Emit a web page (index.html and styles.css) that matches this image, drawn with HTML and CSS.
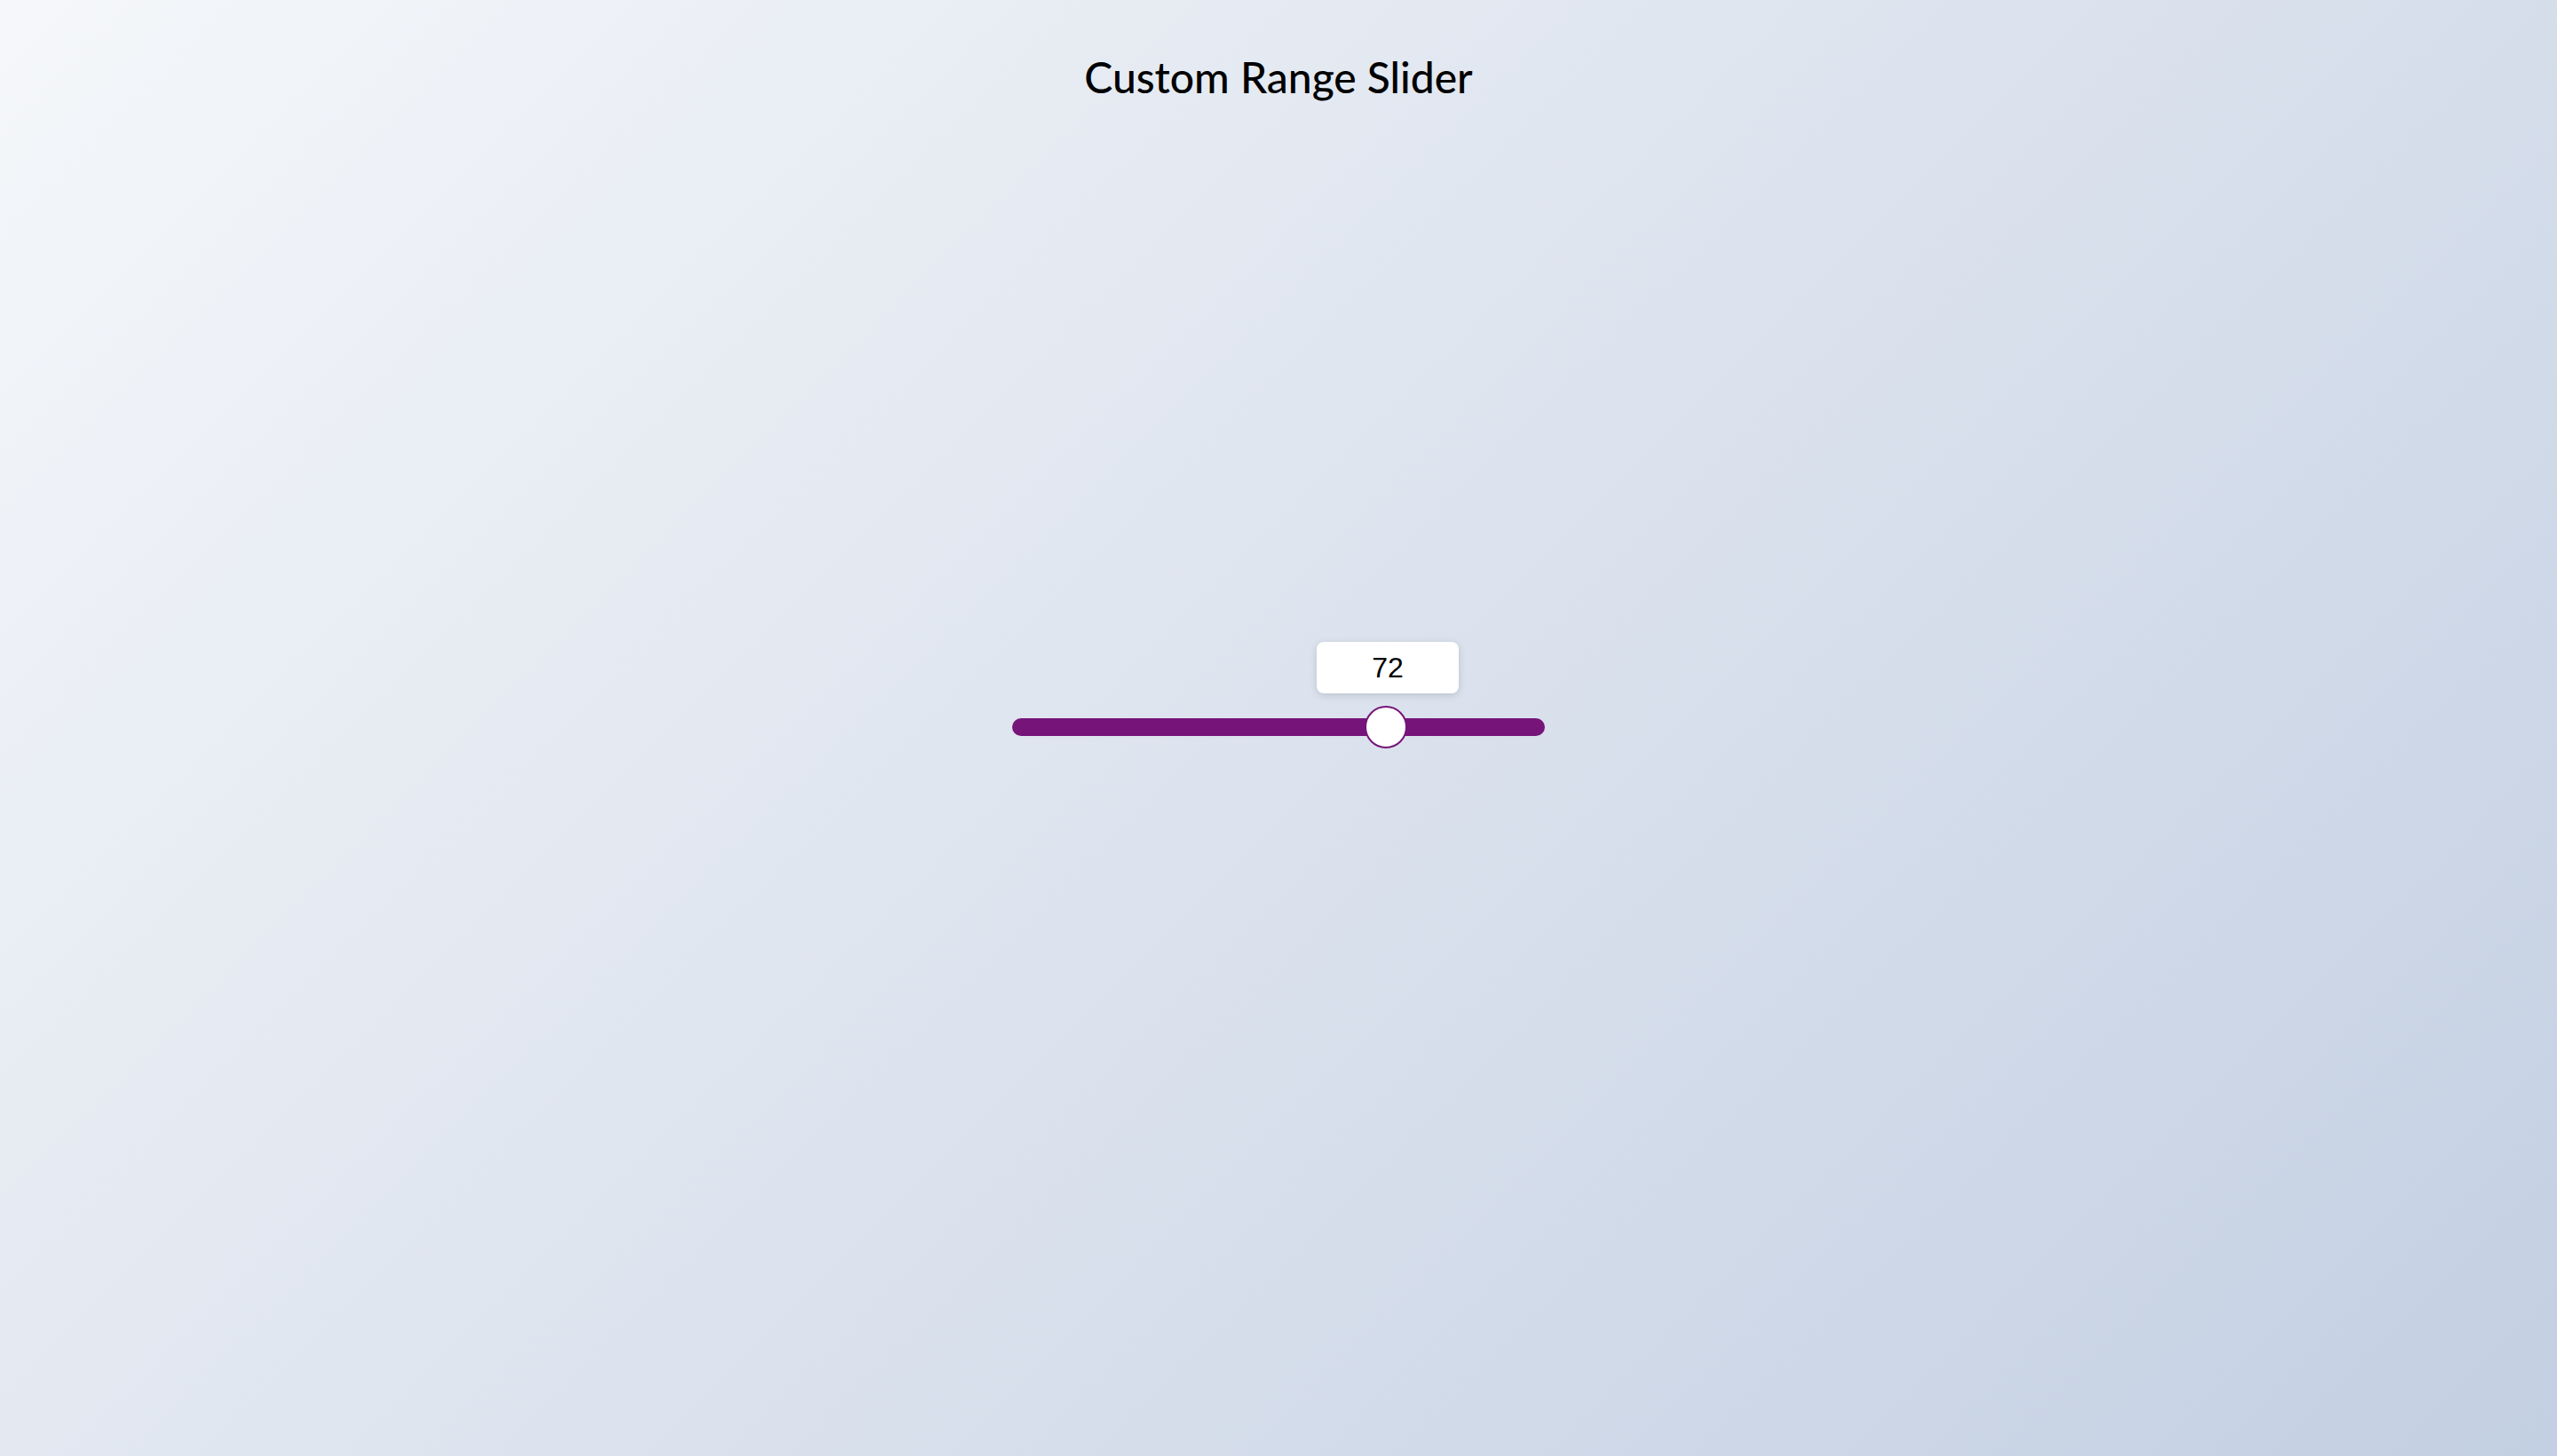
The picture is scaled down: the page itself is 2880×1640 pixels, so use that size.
FILE: index.html
```html
<!DOCTYPE html>
<html lang="en">
<head>
<meta charset="utf-8">
<title>Custom Range Slider</title>
<link rel="stylesheet" href="styles.css">
</head>
<body>
  <h1 class="title">Custom Range Slider</h1>
  <div class="slider-area">
    <div class="range-wrap">
      <div class="range-value" style="left: calc(72% - 9px);">72</div>
      <input class="range" type="range" min="0" max="100" value="72">
    </div>
  </div>
</body>
</html>
```
FILE: styles.css
```css
html, body {
  margin: 0;
  padding: 0;
  height: 100%;
}

body {
  background: linear-gradient(135deg, #f5f7fa 0%, #c3cfe2 100%);
  font-family: Lato, "Open Sans", sans-serif;
  display: grid;
  grid-template-rows: 1fr auto 1fr;
  justify-items: center;
  overflow: hidden;
}

.title {
  align-self: start;
  margin: 58px 0 0;
  font-size: 48px;
  font-weight: 500;
  line-height: normal;
  color: #000;
}

.slider-area {
  grid-row: 2;
  display: flex;
  justify-content: center;
  margin-bottom: 2px;
}

.range-wrap {
  position: relative;
  width: 600px;
  height: 20px;
}

.range {
  -webkit-appearance: none;
  appearance: none;
  display: block;
  margin: 0;
  width: 600px;
  height: 20px;
  border-radius: 10px;
  background: #761479;
  outline: none;
}

.range::-webkit-slider-thumb {
  -webkit-appearance: none;
  appearance: none;
  box-sizing: content-box;
  width: 44px;
  height: 44px;
  border-radius: 50%;
  background: #fff;
  border: 2px solid #761479;
  cursor: pointer;
}

.range-value {
  position: absolute;
  top: -86px;
  transform: translateX(-50%);
  width: 160px;
  height: 58px;
  background: #fff;
  border-radius: 8px;
  box-shadow: 0 2px 8px rgba(0, 0, 0, 0.15);
  display: flex;
  align-items: center;
  justify-content: center;
  font-family: "Liberation Sans", Arial, sans-serif;
  font-size: 32px;
  color: #000;
}
```
